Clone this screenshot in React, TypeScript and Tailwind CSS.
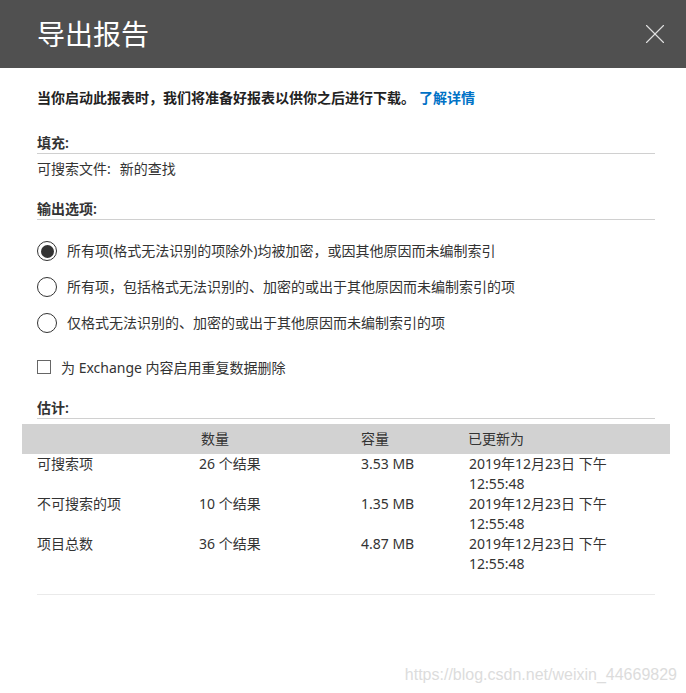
import { X } from "lucide-react"

const font = "font-['Noto_Sans','Noto_Sans_CJK_SC',sans-serif]"

const rows = [
  { name: "可搜索项", count: "26 个结果", size: "3.53 MB" },
  { name: "不可搜索的项", count: "10 个结果", size: "1.35 MB" },
  { name: "项目总数", count: "36 个结果", size: "4.87 MB" },
]

const options = [
  "所有项(格式无法识别的项除外)均被加密，或因其他原因而未编制索引",
  "所有项，包括格式无法识别的、加密的或出于其他原因而未编制索引的项",
  "仅格式无法识别的、加密的或出于其他原因而未编制索引的项",
]

function SectionTitle({ children }: { children: string }) {
  return (
    <div className="h-[20px] border-b border-[#d0d0d0] box-content pb-0 text-[14px] leading-[20px] font-semibold text-[#333]">
      {children}
    </div>
  )
}

function Radio({ checked }: { checked: boolean }) {
  return (
    <span className="flex h-5 w-5 shrink-0 items-center justify-center rounded-full border-[1.5px] border-[#333]">
      {checked && <span className="h-[13px] w-[13px] rounded-full bg-[#333]" />}
    </span>
  )
}

export default function App() {
  return (
    <div className={`relative h-[693px] w-[686px] overflow-hidden bg-white ${font}`}>
      <header className="flex h-[68px] items-center justify-between bg-[#505050] pl-[37px] pr-[14px]">
        <h1 className="text-[28px] leading-none font-normal text-white">导出报告</h1>
        <X className="h-[34px] w-[34px] text-[#e0e0e0]" strokeWidth={0.8} />
      </header>

      <main className="px-[31px] pl-[37px] text-[14px] leading-[20px] text-[#333]">
        <p className="mt-[20px] text-[14px] font-semibold text-[#222]">
          当你启动此报表时，我们将准备好报表以供你之后进行下载。
          <a className="ml-[4px] text-[#0072c6]">了解详情</a>
        </p>

        <section className="mt-[25px]">
          <SectionTitle>填充:</SectionTitle>
          <p className="mt-[5px]">
            可搜索文件:<span className="ml-[9px]">新的查找</span>
          </p>
        </section>

        <section className="mt-[20px]">
          <SectionTitle>输出选项:</SectionTitle>
          <div className="mt-[21px] flex flex-col gap-[16px]">
            {options.map((text, i) => (
              <label key={text} className="flex items-center gap-[10px]">
                <Radio checked={i === 0} />
                <span>{text}</span>
              </label>
            ))}
          </div>
        </section>

        <label className="mt-[25px] flex items-center gap-[10px]">
          <span className="mb-[3px] h-[14px] w-[14px] shrink-0 border border-[#666]" />
          <span>为 Exchange 内容启用重复数据删除</span>
        </label>

        <section className="mt-[20px]">
          <SectionTitle>估计:</SectionTitle>
        </section>

        <div className="-ml-[15px] mt-[5px] flex h-[30px] w-[648px] items-center bg-[#d2d2d2]">
          <span className="ml-[179px] w-[160px]">数量</span>
          <span className="w-[107px]">容量</span>
          <span>已更新为</span>
        </div>

        <div className="border-b border-[#eaeaea] pb-[20px]">
          {rows.map((row) => (
            <div key={row.name} className="flex">
              <span className="w-[162px]">{row.name}</span>
              <span className="w-[162px]">{row.count}</span>
              <span className="w-[108px]">{row.size}</span>
              <span className="w-[150px]">2019年12月23日 下午 12:55:48</span>
            </div>
          ))}
        </div>
      </main>

      <span className="absolute right-[9px] top-[665px] font-['Liberation_Sans',sans-serif] text-[16px] leading-[20px] text-[#dcdcdc]">
        https://blog.csdn.net/weixin_44669829
      </span>
    </div>
  )
}
